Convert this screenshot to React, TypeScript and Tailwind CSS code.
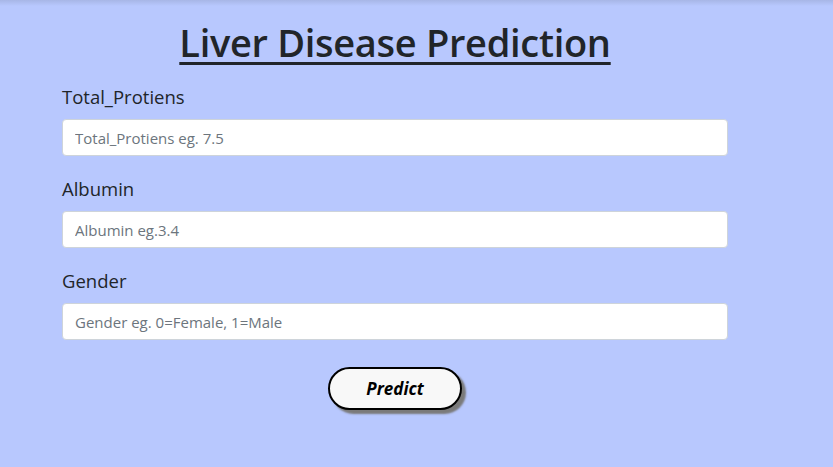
export default function App() {
  const fields = [
    { label: 'Total_Protiens', placeholder: 'Total_Protiens eg. 7.5' },
    { label: 'Albumin', placeholder: 'Albumin eg.3.4' },
    { label: 'Gender', placeholder: 'Gender eg. 0=Female, 1=Male' },
  ];

  return (
    <div className="relative min-h-[467px] w-full bg-[#b8c8fe] font-['Open_Sans',sans-serif] text-[#212529]">
      {/* top edge shade */}
      <div className="pointer-events-none absolute inset-x-0 top-0 h-[6px] bg-gradient-to-b from-[#a7b6e6] to-transparent" />

      <div className="ml-[62px] w-[666px] pt-[19px]">
        <h1 className="text-center text-[38px] font-semibold leading-[46px] tracking-[-0.3px] text-[#212529] underline decoration-[3px] underline-offset-[5px]">
          Liver Disease Prediction
        </h1>

        <form className="mt-[16px] flex flex-col gap-[17px]">
          {fields.map((f) => (
            <div key={f.label} className="flex flex-col">
              <label className="text-[18.5px] leading-[32px] text-[#212529]">{f.label}</label>
              <input
                className="mt-[6px] h-[37px] w-full rounded-[4px] border border-[#ced4da] bg-white px-[12px] text-[15px] text-[#495057] placeholder:text-[#6c757d] outline-none"
                placeholder={f.placeholder}
              />
            </div>
          ))}

          <div className="mt-[10px] flex justify-center">
            <button
              type="button"
              className="h-[43px] w-[134px] rounded-full border-2 border-black bg-[#f8f8f8] text-[17px] font-bold italic text-black shadow-[4px_4px_2px_#7a7a7a]"
            >
              Predict
            </button>
          </div>
        </form>
      </div>
    </div>
  );
}
